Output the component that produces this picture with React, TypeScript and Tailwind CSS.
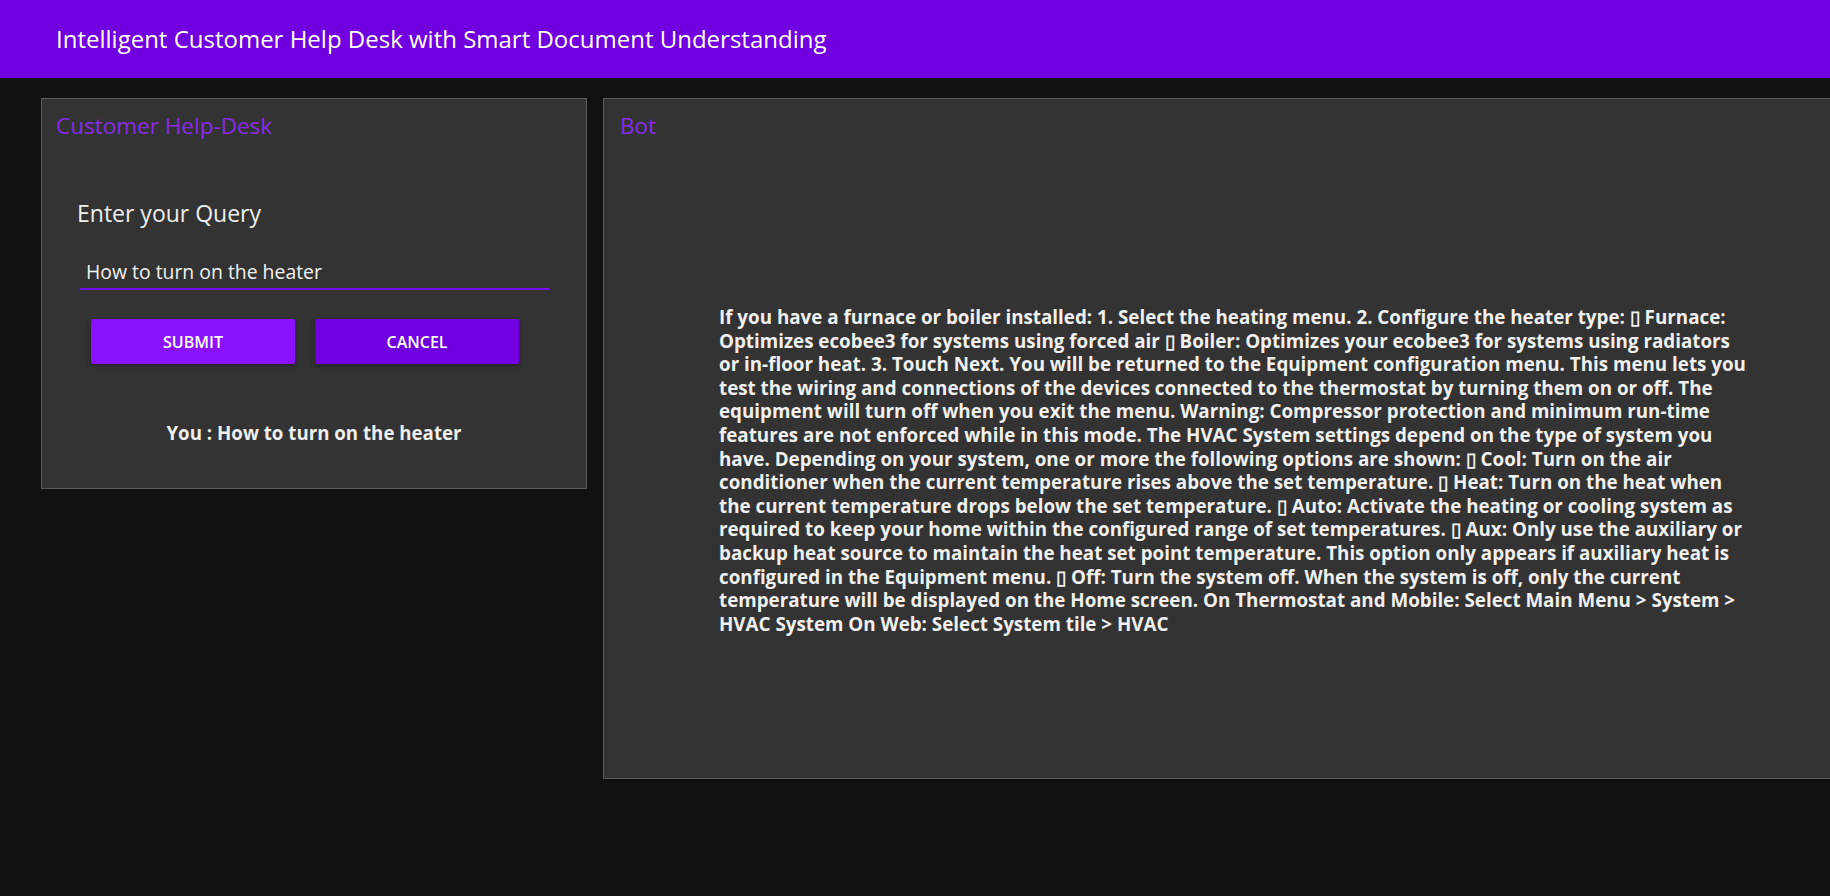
import React from 'react';

// answer text, broken the way the reference wraps it
const answerLines = [
  'If you have a furnace or boiler installed: 1. Select the heating menu. 2. Configure the heater type: \u25AF Furnace:',
  'Optimizes ecobee3 for systems using forced air \u25AF Boiler: Optimizes your ecobee3 for systems using radiators',
  'or in-floor heat. 3. Touch Next. You will be returned to the Equipment configuration menu. This menu lets you',
  'test the wiring and connections of the devices connected to the thermostat by turning them on or off. The',
  'equipment will turn off when you exit the menu. Warning: Compressor protection and minimum run-time',
  'features are not enforced while in this mode. The HVAC System settings depend on the type of system you',
  'have. Depending on your system, one or more the following options are shown: \u25AF Cool: Turn on the air',
  'conditioner when the current temperature rises above the set temperature. \u25AF Heat: Turn on the heat when',
  'the current temperature drops below the set temperature. \u25AF Auto: Activate the heating or cooling system as',
  'required to keep your home within the configured range of set temperatures. \u25AF Aux: Only use the auxiliary or',
  'backup heat source to maintain the heat set point temperature. This option only appears if auxiliary heat is',
  'configured in the Equipment menu. \u25AF Off: Turn the system off. When the system is off, only the current',
  'temperature will be displayed on the Home screen. On Thermostat and Mobile: Select Main Menu > System >',
  'HVAC System On Web: Select System tile > HVAC',
];

export default function App() {
  const query = 'How to turn on the heater';

  return (
    <div className="min-h-screen overflow-hidden bg-[#111111] font-['Open_Sans',sans-serif]">
      <header className="flex h-[78px] items-center bg-[#7000df] px-[56px]">
        <h1 className="text-[24px] font-normal text-white">
          Intelligent Customer Help Desk with Smart Document Understanding
        </h1>
      </header>

      <main className="flex items-start gap-[16px] pl-[41px] pt-[20px]">
        {/* query panel */}
        <section className="h-[391px] w-[546px] shrink-0 border border-[#5c5c5c] bg-[#333333] px-[14px] pt-[13px]">
          <h2 className="text-[22.5px] leading-[28px] text-[#8a2be8]">Customer Help-Desk</h2>

          <div className="px-[21px] pt-[59px]">
            <p className="text-[23px] leading-[28px] text-[#eeeeee]">Enter your Query</p>

            <div className="ml-[3px] mr-[2px] mt-[33px] border-b-2 border-[#7a10f0] pb-[3px] pl-[6px]">
              <input
                className="w-full bg-transparent text-[19.4px] leading-[24px] text-[#f2f2f2] outline-none"
                defaultValue={query}
              />
            </div>

            <div className="mt-[29px] flex gap-[20px] pl-[14px]">
              <button className="h-[45px] w-[204px] rounded-[2px] bg-[#8a12ff] text-[16px] font-semibold text-white shadow-[0_2px_4px_rgba(0,0,0,0.35)]">
                SUBMIT
              </button>
              <button className="h-[45px] w-[204px] rounded-[2px] bg-[#7000df] text-[16px] font-semibold text-white shadow-[0_2px_4px_rgba(0,0,0,0.35)]">
                CANCEL
              </button>
            </div>
          </div>

          <p className="mt-[55px] text-center text-[18.7px] font-bold text-[#eeeeee]">You : {query}</p>
        </section>

        {/* bot panel */}
        <section className="h-[681px] w-[1260px] shrink-0 border border-[#5c5c5c] bg-[#333333] px-[16px] pt-[13px]">
          <h2 className="text-[22.5px] leading-[28px] text-[#8a2be8]">Bot</h2>
          <p className="ml-[99px] mt-[166px] text-[18.8px] font-bold leading-[23.6px] text-[#f0f0f0]">
            {answerLines.map((line, i) => (
              <span key={i} className="block whitespace-nowrap">
                {line}
              </span>
            ))}
          </p>
        </section>
      </main>
    </div>
  );
}
